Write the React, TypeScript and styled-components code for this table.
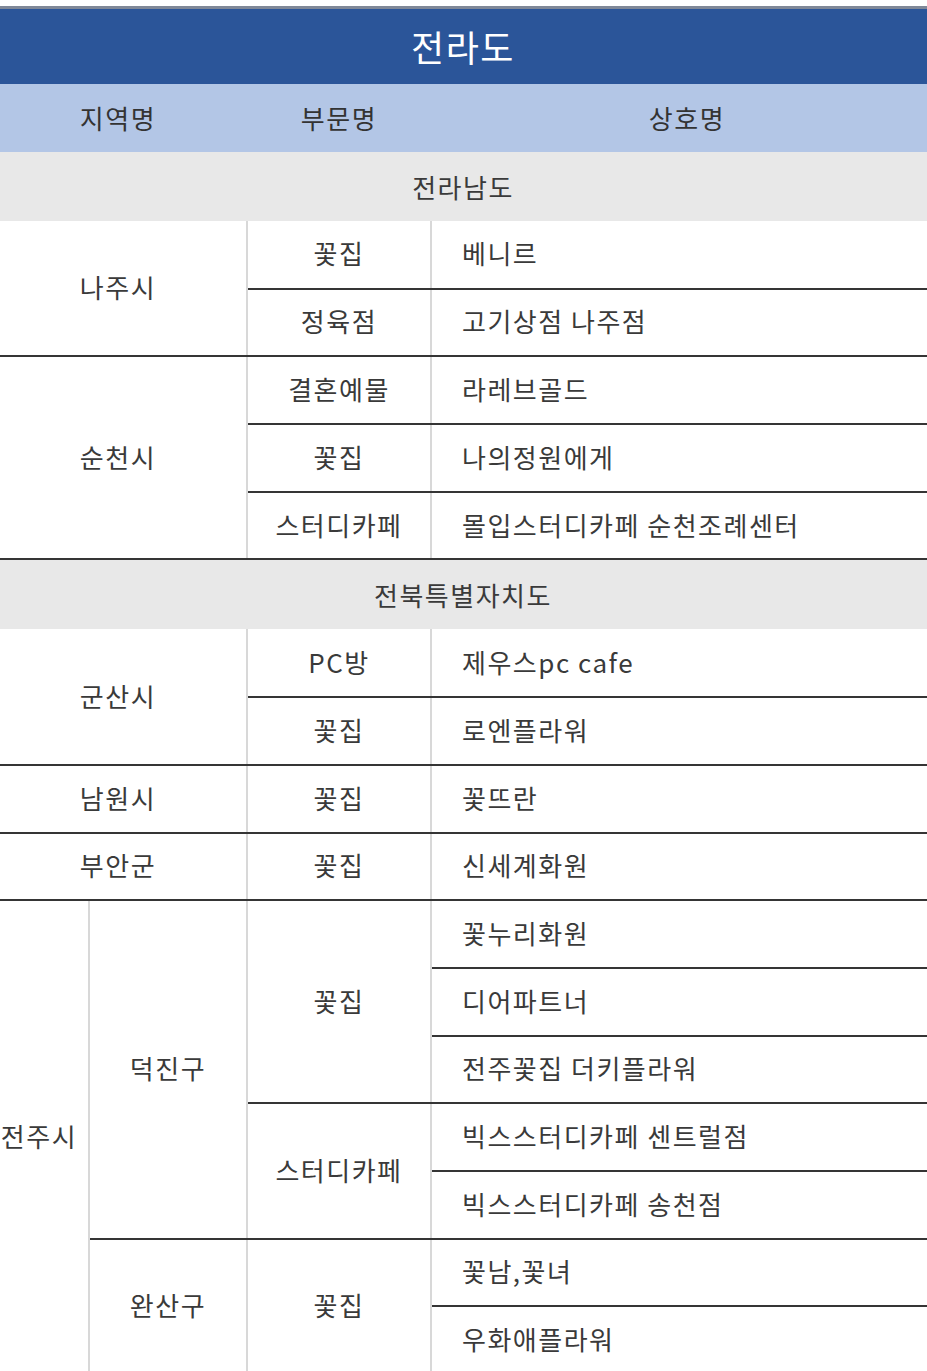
import React from "react";
import styled, { createGlobalStyle } from "styled-components";

// global
const GlobalStyle = createGlobalStyle`
  html, body {
    margin: 0;
    padding: 0;
    background: #ffffff;
    overflow: hidden;
  }
  body {
    font-family: "Noto Sans CJK KR", "Noto Sans", sans-serif;
    color: #3a3a3a;
  }
`;

// styles
const Page = styled.div`
  width: 927px;
  height: 1371px;
  overflow: hidden;
  padding-top: 6px;
  box-sizing: border-box;
`;

const Table = styled.table`
  width: 954px;
  margin-left: -12px;
  border-collapse: collapse;
  table-layout: fixed;
`;

const TitleCell = styled.th`
  height: 75px;
  padding: 0 6px 0 0;
  border-top: 3px solid #7f8898;
  background: #2b5599;
  color: #ffffff;
  font-size: 36px;
  font-weight: 400;
  letter-spacing: 1.5px;
  line-height: 1.2;
  text-align: center;
`;

const HeadCell = styled.th`
  height: 68px;
  padding: 0;
  background: #b3c6e6;
  color: #333333;
  font-size: 26px;
  font-weight: 400;
  letter-spacing: 1.5px;
  line-height: 1.2;
  text-align: center;
`;

const SectionCell = styled.td`
  height: 69px;
  padding: 0 6px 0 0;
  background: #e8e8e8;
  font-size: 26px;
  letter-spacing: 1.5px;
  line-height: 1.2;
  text-align: center;
`;

const Cell = styled.td<{ $left?: boolean }>`
  height: 67.7px;
  box-sizing: border-box;
  padding: 0 0 3px ${(p) => (p.$left ? "30px" : "0")};
  font-size: 26px;
  letter-spacing: 1.5px;
  line-height: 1.2;
  text-align: ${(p) => (p.$left ? "left" : "center")};
  vertical-align: middle;
  white-space: nowrap;
  border-left: 2px solid #d8d8d8;
  border-right: 2px solid #d8d8d8;
  border-bottom: 2px solid #353535;
`;

interface Category {
  label: string;
  stores: string[];
}

interface Region {
  city: string;
  district?: { name: string; categories: Category[] }[];
  categories?: Category[];
}

interface Section {
  title: string;
  regions: Region[];
}

const sections: Section[] = [
  {
    title: "전라남도",
    regions: [
      {
        city: "나주시",
        categories: [
          { label: "꽃집", stores: ["베니르"] },
          { label: "정육점", stores: ["고기상점 나주점"] },
        ],
      },
      {
        city: "순천시",
        categories: [
          { label: "결혼예물", stores: ["라레브골드"] },
          { label: "꽃집", stores: ["나의정원에게"] },
          { label: "스터디카페", stores: ["몰입스터디카페 순천조례센터"] },
        ],
      },
    ],
  },
  {
    title: "전북특별자치도",
    regions: [
      {
        city: "군산시",
        categories: [
          { label: "PC방", stores: ["제우스pc cafe"] },
          { label: "꽃집", stores: ["로엔플라워"] },
        ],
      },
      { city: "남원시", categories: [{ label: "꽃집", stores: ["꽃뜨란"] }] },
      { city: "부안군", categories: [{ label: "꽃집", stores: ["신세계화원"] }] },
      {
        city: "전주시",
        district: [
          {
            name: "덕진구",
            categories: [
              { label: "꽃집", stores: ["꽃누리화원", "디어파트너", "전주꽃집 더키플라워"] },
              { label: "스터디카페", stores: ["빅스스터디카페 센트럴점", "빅스스터디카페 송천점"] },
            ],
          },
          {
            name: "완산구",
            categories: [{ label: "꽃집", stores: ["꽃남,꽃녀", "우화애플라워"] }],
          },
        ],
      },
    ],
  },
];

const countCats = (cats: Category[]) => cats.reduce((n, c) => n + c.stores.length, 0);

const renderRegion = (region: Region, key: string) => {
  const rows: React.ReactNode[] = [];

  if (region.categories) {
    const total = countCats(region.categories);
    region.categories.forEach((cat, ci) => {
      cat.stores.forEach((store, si) => {
        rows.push(
          <tr key={`${key}-${ci}-${si}`}>
            {ci === 0 && si === 0 && (
              <Cell colSpan={2} rowSpan={total}>
                {region.city}
              </Cell>
            )}
            {si === 0 && <Cell rowSpan={cat.stores.length}>{cat.label}</Cell>}
            <Cell $left>{store}</Cell>
          </tr>
        );
      });
    });
  } else if (region.district) {
    const total = region.district.reduce((n, d) => n + countCats(d.categories), 0);
    region.district.forEach((d, di) => {
      const dTotal = countCats(d.categories);
      d.categories.forEach((cat, ci) => {
        cat.stores.forEach((store, si) => {
          rows.push(
            <tr key={`${key}-${di}-${ci}-${si}`}>
              {di === 0 && ci === 0 && si === 0 && <Cell rowSpan={total}>{region.city}</Cell>}
              {ci === 0 && si === 0 && <Cell rowSpan={dTotal}>{d.name}</Cell>}
              {si === 0 && <Cell rowSpan={cat.stores.length}>{cat.label}</Cell>}
              <Cell $left>{store}</Cell>
            </tr>
          );
        });
      });
    });
  }
  return rows;
};

export default function App() {
  return (
    <>
      <GlobalStyle />
      <Page>
        <Table>
          <colgroup>
            <col style={{ width: 100 }} />
            <col style={{ width: 158 }} />
            <col style={{ width: 184 }} />
            <col style={{ width: 512 }} />
          </colgroup>
          <thead>
            <tr>
              <TitleCell colSpan={4}>전라도</TitleCell>
            </tr>
            <tr>
              <HeadCell colSpan={2}>지역명</HeadCell>
              <HeadCell>부문명</HeadCell>
              <HeadCell>상호명</HeadCell>
            </tr>
          </thead>
          <tbody>
            {sections.map((section) => (
              <React.Fragment key={section.title}>
                <tr>
                  <SectionCell colSpan={4}>{section.title}</SectionCell>
                </tr>
                {section.regions.map((r) => renderRegion(r, `${section.title}-${r.city}`))}
              </React.Fragment>
            ))}
          </tbody>
        </Table>
      </Page>
    </>
  );
}
